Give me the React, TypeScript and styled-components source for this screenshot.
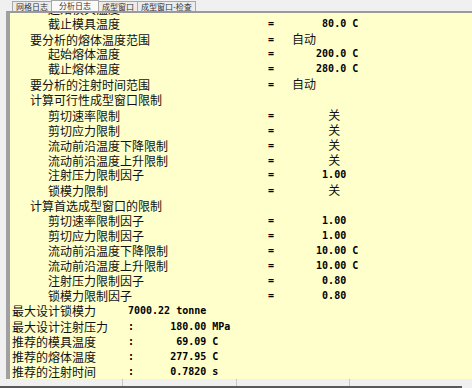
import React from 'react';
import styled, { createGlobalStyle } from 'styled-components';

const GlobalStyle = createGlobalStyle`
  html, body {
    margin: 0;
    padding: 0;
    background: #f0f0f0;
  }
`;

const Frame = styled.div`
  width: 472px;
  height: 388px;
  display: flex;
  flex-direction: column;
  overflow: hidden;
  background: #f0f0f0;
`;

const TabBar = styled.div`
  height: 11px;
  display: flex;
  align-items: flex-end;
  padding-left: 13px;
  background: #f0f0f0;
`;

const Tab = styled.div<{ $active?: boolean }>`
  height: ${p => (p.$active ? 11 : 10)}px;
  box-sizing: border-box;
  padding: 0 ${p => (p.$active ? 7 : 3)}px;
  display: flex;
  align-items: center;
  border: 1px solid #a8a8a8;
  border-bottom: none;
  margin-left: -1px;
  background: ${p => (p.$active ? '#fafafa' : '#ececec')};
  font-family: 'Noto Sans CJK SC', sans-serif;
  font-size: 8px;
  line-height: 8px;
  color: #333;
  white-space: nowrap;
`;

const Body = styled.div`
  flex: 1;
  display: flex;
  min-height: 0;
`;

const Gutter = styled.div`
  width: 6px;
  background: #f0f0f0;
`;

const Panel = styled.div`
  flex: 1;
  background: #ffffcc;
  border-left: 4px solid #a0a0a0;
  border-top: 2px solid #9a9a9a;
  overflow: hidden;
  padding-left: 2px;
`;

/* content is scrolled: the row above the first full one is cut */
const Log = styled.div`
  margin-top: -12.4px;
`;

const Row = styled.div`
  display: grid;
  grid-template-columns: 256px 24px 1fr;
  align-items: center;
  height: 15.15px;
`;

const SummaryRow = styled(Row)`
  grid-template-columns: 116px 1fr;
`;

const Label = styled.span<{ $indent: number }>`
  padding-left: ${p => p.$indent * 18}px;
  font-family: 'Noto Sans CJK SC', sans-serif;
  font-size: 12px;
  line-height: 15px;
  color: #111;
  white-space: nowrap;
`;

const Mono = styled.span`
  font-family: 'DejaVu Sans Mono', monospace;
  font-weight: bold;
  font-size: 10px;
  line-height: 15px;
  color: #000;
  white-space: pre;
`;

const Cjk = styled.span`
  font-family: 'Noto Sans CJK SC', sans-serif;
  font-weight: normal;
  font-size: 12px;
  color: #111;
`;

const StatusBar = styled.div`
  height: 7px;
  display: grid;
  grid-template-columns: 123px 114px 113px 1fr;
  background: #f0f0f0;
`;

const StatusCell = styled.div`
  border-right: 1px solid #c8c8c8;
  &:last-child {
    border-right: none;
  }
`;

const BottomEdge = styled.div`
  height: 2px;
  width: 462px;
  background: #5a5a5a;
`;

type Entry = {
  indent: number;
  label: string;
  num?: string;
  word?: string;
  pad?: string;
};

const OFF = '关';

const entries: Entry[] = [
  { indent: 2, label: '起始模具温度', num: '     40.0 C' },
  { indent: 2, label: '截止模具温度', num: '     80.0 C' },
  { indent: 1, label: '要分析的熔体温度范围', word: '自动', pad: '' },
  { indent: 2, label: '起始熔体温度', num: '    200.0 C' },
  { indent: 2, label: '截止熔体温度', num: '    280.0 C' },
  { indent: 1, label: '要分析的注射时间范围', word: '自动', pad: '' },
  { indent: 1, label: '计算可行性成型窗口限制' },
  { indent: 2, label: '剪切速率限制', word: OFF, pad: '      ' },
  { indent: 2, label: '剪切应力限制', word: OFF, pad: '      ' },
  { indent: 2, label: '流动前沿温度下降限制', word: OFF, pad: '      ' },
  { indent: 2, label: '流动前沿温度上升限制', word: OFF, pad: '      ' },
  { indent: 2, label: '注射压力限制因子', num: '     1.00' },
  { indent: 2, label: '锁模力限制', word: OFF, pad: '      ' },
  { indent: 1, label: '计算首选成型窗口的限制' },
  { indent: 2, label: '剪切速率限制因子', num: '     1.00' },
  { indent: 2, label: '剪切应力限制因子', num: '     1.00' },
  { indent: 2, label: '流动前沿温度下降限制', num: '    10.00 C' },
  { indent: 2, label: '流动前沿温度上升限制', num: '    10.00 C' },
  { indent: 2, label: '注射压力限制因子', num: '     0.80' },
  { indent: 2, label: '锁模力限制因子', num: '     0.80' },
];

const summary: [string, string][] = [
  ['最大设计锁模力', '7000.22 tonne'],
  ['最大设计注射压力', ':      180.00 MPa'],
  ['推荐的模具温度', ':       69.09 C'],
  ['推荐的熔体温度', ':      277.95 C'],
  ['推荐的注射时间', ':      0.7820 s'],
];

const tabs = ['网格日志', '分析日志', '成型窗口', '成型窗口-检查'];

export default function App() {
  return (
    <>
      <GlobalStyle />
      <Frame>
        <TabBar>
          {tabs.map((t, i) => (
            <Tab key={t} $active={i === 1}>
              {t}
            </Tab>
          ))}
        </TabBar>
        <Body>
          <Gutter />
          <Panel>
            <Log>
              {entries.map((e, i) => {
                const hasValue = e.num !== undefined || e.word !== undefined;
                return (
                  <Row key={i}>
                    <Label $indent={e.indent}>{e.label}</Label>
                    <Mono>{hasValue ? '=' : ''}</Mono>
                    <Mono>
                      {e.num}
                      {e.word !== undefined && (
                        <>
                          {e.pad}
                          <Cjk>{e.word}</Cjk>
                        </>
                      )}
                    </Mono>
                  </Row>
                );
              })}
              {summary.map(([label, value]) => (
                <SummaryRow key={label}>
                  <Label $indent={0}>{label}</Label>
                  <Mono>{value}</Mono>
                </SummaryRow>
              ))}
            </Log>
          </Panel>
        </Body>
        <StatusBar>
          <StatusCell />
          <StatusCell />
          <StatusCell />
          <StatusCell />
        </StatusBar>
        <BottomEdge />
      </Frame>
    </>
  );
}
